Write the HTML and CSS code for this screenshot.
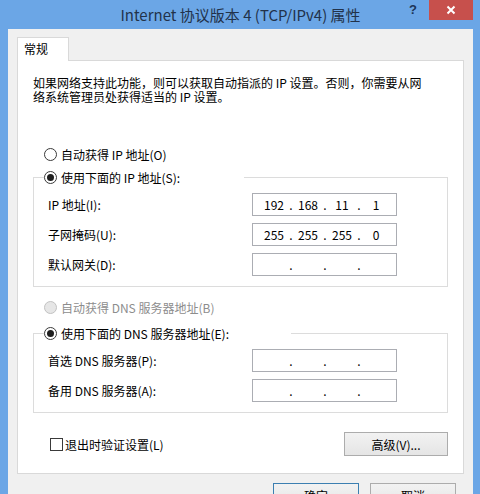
FILE: index.html
```html
<!DOCTYPE html>
<html lang="zh-CN">
<head>
    <meta charset="UTF-8">
    <meta name="viewport" content="width=device-width, initial-scale=1.0">
    <title>Internet 协议版本 4 (TCP/IPv4) 属性</title>
    <link rel="stylesheet" href="styles.css">
</head>
<body>
    <div class="window">
        <div class="titlebar">
            <span></span>
            <div class="title">Internet 协议版本 4 (TCP/IPv4) 属性</div>
            <div class="caption-buttons">
                <span class="help">?</span>
                <span class="close" title="关闭">
                    <svg width="10" height="10" viewBox="0 0 10 10">
                        <path d="M1.5 1.5 L8.5 8.5 M8.5 1.5 L1.5 8.5" stroke="#fff" stroke-width="2" fill="none"/>
                    </svg>
                </span>
            </div>
        </div>

        <div class="client">
            <div class="tabs">
                <div class="tab">常规</div>
            </div>

            <div class="panel">
                <p class="desc">如果网络支持此功能，则可以获取自动指派的 IP 设置。否则，你需要从网</p>
                <p class="desc">络系统管理员处获得适当的 IP 设置。</p>

                <div class="radio-row first">
                    <span class="radio"></span>自动获得 IP 地址(O)
                </div>

                <div class="group">
                    <div class="group-title ip-title">
                        <span class="radio checked"></span>使用下面的 IP 地址(S):
                    </div>
                    <div class="group-body">
                        <div class="field">
                            <span>IP 地址(I):</span>
                            <div class="ip">
                                <span>192</span><span>.</span><span>168</span><span>.</span><span>11</span><span>.</span><span>1</span>
                            </div>
                        </div>
                        <div class="field">
                            <span>子网掩码(U):</span>
                            <div class="ip">
                                <span>255</span><span>.</span><span>255</span><span>.</span><span>255</span><span>.</span><span>0</span>
                            </div>
                        </div>
                        <div class="field">
                            <span>默认网关(D):</span>
                            <div class="ip">
                                <span></span><span>.</span><span></span><span>.</span><span></span><span>.</span><span></span>
                            </div>
                        </div>
                    </div>
                </div>

                <div class="radio-row disabled">
                    <span class="radio"></span>自动获得 DNS 服务器地址(B)
                </div>

                <div class="group dns">
                    <div class="group-title dns-title">
                        <span class="radio checked"></span>使用下面的 DNS 服务器地址(E):
                    </div>
                    <div class="group-body">
                        <div class="field">
                            <span>首选 DNS 服务器(P):</span>
                            <div class="ip">
                                <span></span><span>.</span><span></span><span>.</span><span></span><span>.</span><span></span>
                            </div>
                        </div>
                        <div class="field">
                            <span>备用 DNS 服务器(A):</span>
                            <div class="ip">
                                <span></span><span>.</span><span></span><span>.</span><span></span><span>.</span><span></span>
                            </div>
                        </div>
                    </div>
                </div>

                <div class="bottom-row">
                    <div class="check-row">
                        <span class="checkbox"></span>退出时验证设置(L)
                    </div>
                    <button class="btn advanced">高级(V)...</button>
                </div>
            </div>

            <div class="footer">
                <button class="btn default">确定</button>
                <button class="btn">取消</button>
            </div>
        </div>
    </div>
</body>
</html>
```

FILE: styles.css
```css
html, body {
    margin: 0;
    padding: 0;
}

body {
    width: 480px;
    height: 494px;
    overflow: hidden;
    background: #6ba6e6;
    font-family: "Noto Sans CJK SC", "Microsoft YaHei", sans-serif;
    font-size: 12px;
    color: #000;
}

.window {
    width: 480px;
}

/* Title bar */
.titlebar {
    display: grid;
    grid-template-columns: 1fr auto 1fr;
    height: 29px;
    padding: 0 7px 0 8px;
}

.title {
    align-self: center;
    font-size: 15px;
    line-height: 20px;
    color: #22324a;
    white-space: nowrap;
}

.caption-buttons {
    justify-self: end;
    display: flex;
    align-items: flex-start;
}

.help {
    width: 24px;
    height: 20px;
    margin-right: 4px;
    line-height: 20px;
    text-align: center;
    font-family: "Liberation Sans", sans-serif;
    font-weight: bold;
    font-size: 13px;
    color: #1d3557;
}

.close {
    display: flex;
    align-items: center;
    justify-content: center;
    width: 44px;
    height: 20px;
    background: #c7504c;
}

/* Client area */
.client {
    margin: 0 7px 0 8px;
    padding: 8px 9px 0 9px;
    background: #f0f0f0;
    height: 470px;
    box-sizing: border-box;
}

.tabs {
    display: flex;
}

.tab {
    position: relative;
    z-index: 1;
    width: 52px;
    height: 24px;
    margin-bottom: -1px;
    box-sizing: border-box;
    padding-left: 6px;
    line-height: 22px;
    background: #fff;
    border: 1px solid #d9d9d9;
    border-bottom: none;
}

.panel {
    background: #fff;
    border: 1px solid #d9d9d9;
    padding: 15px 15px 17px 15px;
}

.desc {
    margin: 0;
    height: 14px;
    line-height: 14px;
    white-space: nowrap;
}

/* Radio buttons and checkbox */
.radio-row {
    display: flex;
    align-items: center;
    height: 16px;
    margin-left: 11px;
}

.radio-row.first {
    margin-top: 42px;
}

.radio-row.disabled {
    margin-top: 12px;
    color: #8d8d8d;
}

.radio {
    position: relative;
    width: 13px;
    height: 13px;
    margin-right: 4px;
    box-sizing: border-box;
    border: 1px solid #3a3a3a;
    border-radius: 50%;
    background: #fff;
    flex: none;
}

.radio.checked::after {
    content: "";
    position: absolute;
    left: 2px;
    top: 2px;
    width: 7px;
    height: 7px;
    border-radius: 50%;
    background: #1e1e1e;
}

.disabled .radio {
    border-color: #c2c2c2;
    background: #e6e6e6;
}

.check-row {
    display: flex;
    align-items: center;
    margin-left: 17px;
}

.checkbox {
    width: 13px;
    height: 13px;
    margin-right: 2px;
    box-sizing: border-box;
    border: 1px solid #3a3a3a;
    background: #fff;
}

/* Group boxes */
.group {
    margin-top: 15px;
    border: 1px solid #dcdcdc;
}

.group.dns {
    margin-top: 18px;
}

.group-title {
    display: flex;
    align-items: center;
    height: 16px;
    margin: -9px 0 0 10px;
    background: #fff;
}

.ip-title {
    width: 200px;
}

.dns-title {
    width: 247px;
}

.group-body {
    display: flex;
    flex-direction: column;
    gap: 7px;
    padding: 8px 0 10px 14px;
}

.field {
    display: grid;
    grid-template-columns: 204px 145px;
    align-items: center;
}

.ip {
    display: grid;
    grid-template-columns: 28px 6px 28px 6px 28px 6px 28px;
    height: 23px;
    box-sizing: border-box;
    padding-left: 7px;
    border: 1px solid #abadb3;
    line-height: 21px;
    text-align: center;
}

/* Buttons */
.bottom-row {
    display: flex;
    justify-content: space-between;
    align-items: center;
    margin-top: 19px;
}

.btn {
    height: 24px;
    padding: 0;
    font-family: inherit;
    font-size: 12px;
    color: #000;
    background: linear-gradient(#f2f2f2, #e5e5e5);
    border: 1px solid #acacac;
}

.advanced {
    width: 104px;
}

.footer {
    display: flex;
    justify-content: flex-end;
    gap: 11px;
    margin-top: 9px;
    padding-right: 8px;
}

.footer .btn {
    width: 86px;
}

.btn.default {
    border-color: #3c7fb1;
}
```
